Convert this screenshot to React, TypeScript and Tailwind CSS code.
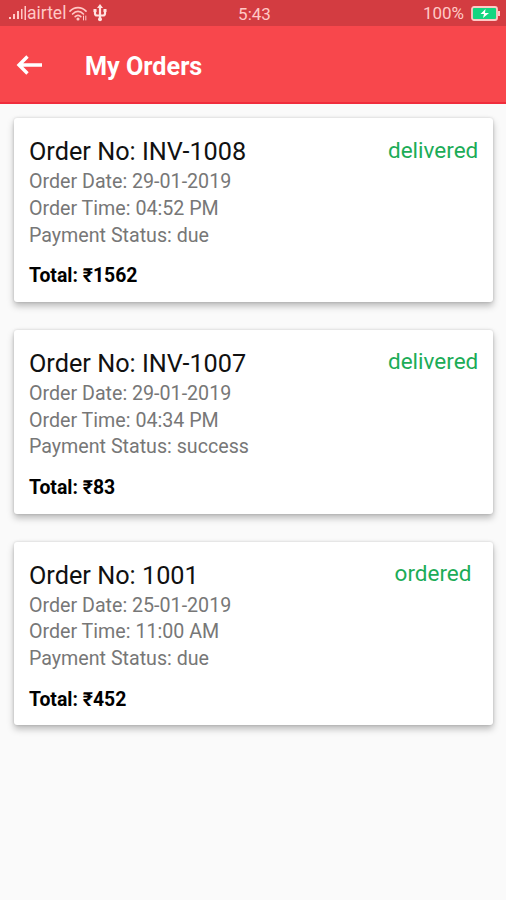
import React from "react";

const orders = [
  {
    number: "INV-1008",
    date: "29-01-2019",
    time: "04:52 PM",
    payment: "due",
    total: "1562",
    status: "delivered",
  },
  {
    number: "INV-1007",
    date: "29-01-2019",
    time: "04:34 PM",
    payment: "success",
    total: "83",
    status: "delivered",
  },
  {
    number: "1001",
    date: "25-01-2019",
    time: "11:00 AM",
    payment: "due",
    total: "452",
    status: "ordered",
  },
];

const StatusBar = () => (
  <div className="flex h-[26px] items-center justify-between bg-[#d33c41] pl-[9px] pr-[6px] text-[17px] leading-none text-[#ffc9c6]">
    <div className="flex w-[180px] items-center">
      <svg width="17" height="14" viewBox="0 0 17 14" fill="currentColor">
        <rect x="0" y="11" width="2" height="2" />
        <rect x="4" y="8" width="2" height="5" />
        <rect x="8" y="5" width="2" height="8" />
        <rect x="12" y="3" width="1.500" height="10" />
        <rect x="15.500" y="0" width="1.500" height="14" />
      </svg>
      <span className="ml-[1px] mt-[2px] text-[17.500px]">airtel</span>
      <svg
        className="ml-[3px]"
        width="18"
        height="15"
        viewBox="0 0 18 15"
        fill="none"
        stroke="currentColor"
        strokeWidth="1.7"
        strokeLinecap="round"
      >
        <path d="M1 5.2C5.5.4 12.5.4 17 5.2" />
        <path d="M3.600 8C7 4.600 11 4.600 14.400 8" />
        <path d="M6.200 10.700c1.800-1.800 3.800-1.800 5.600 0" />
        <circle cx="9" cy="13" r=".7" fill="currentColor" />
        <path d="M14.500 10v4M16.800 10v4" strokeWidth="1" />
      </svg>
      <svg
        className="ml-[6px]"
        width="14"
        height="18"
        viewBox="0 0 14 18"
        fill="none"
        stroke="#ffe3e1"
        strokeWidth="2.2"
      >
        <path d="M7 3v12M2 6v3.500q0 2 2 2h6q2 0 2-2V6" />
        <path d="M7 0l3 4H4z" fill="#ffe3e1" stroke="none" />
        <circle cx="7" cy="15.300" r="2" fill="#ffe3e1" stroke="none" />
        <path d="M.5 5h3v3h-3zM10.500 5h3v3h-3z" fill="#ffe3e1" stroke="none" />
      </svg>
    </div>
    <span className="mt-[2px]">5:43</span>
    <div className="flex w-[180px] items-center justify-end">
      <span>100%</span>
      <svg className="ml-[7px]" width="29" height="15" viewBox="0 0 29 15">
        <rect x="1" y="1" width="25" height="13" rx="2" fill="#13d680" stroke="#ffc9c6" strokeWidth="1.8" />
        <rect x="27" y="5" width="2" height="5" fill="#ffc9c6" />
        <path d="M14.500 3l-5 5h3.500l-1 4 6-5h-4z" fill="#fff" />
      </svg>
    </div>
  </div>
);

const Header = () => (
  <div className="flex h-[78px] items-center border-b-2 border-[#f02d3c] bg-[#f8474c] pl-[16px] pt-[2px] text-white">
    <svg
      width="27"
      height="22"
      viewBox="0 0 27 22"
      fill="none"
      stroke="currentColor"
      strokeWidth="3.4"
    >
      <path d="M26 11H3M11.500 2.500L3 11l8.500 8.500" />
    </svg>
    <h1 className="ml-[42px] mt-[3px] text-[25.200px] font-bold leading-none">My Orders</h1>
  </div>
);

const App = () => {
  return (
    <div className="min-h-[900px] bg-[#fafafa] font-['Roboto',sans-serif]">
      <StatusBar />
      <Header />
      <div className="flex flex-col gap-[28px] pl-[14px] pr-[13px] pt-[14px]">
        {orders.map((order) => (
          <div
            key={order.number}
            className="flex h-[183.800px] justify-between rounded-[3px] bg-white pl-[15px] pr-[15px] pt-[18px] shadow-[0_4px_7px_rgba(0,0,0,0.26),0_0_3px_rgba(0,0,0,0.16)]"
          >
            <div>
              <h2 className="text-[25.250px] leading-[32px] text-[#111]">
                Order No: {order.number}
              </h2>
              <div className="mt-[1px] text-[19.650px] leading-[26.800px] text-[#777]">
                <p>Order Date: {order.date}</p>
                <p>Order Time: {order.time}</p>
                <p>Payment Status: {order.payment}</p>
              </div>
              <p className="mt-[14px] text-[19.400px] font-bold leading-[26px] text-black">
                Total: ₹{order.total}
              </p>
            </div>
            <p className="-mt-[0.500px] w-[90px] text-center text-[22.500px] leading-[28px] text-[#1cac57]">
              {order.status}
            </p>
          </div>
        ))}
      </div>
    </div>
  );
};

export default App;
